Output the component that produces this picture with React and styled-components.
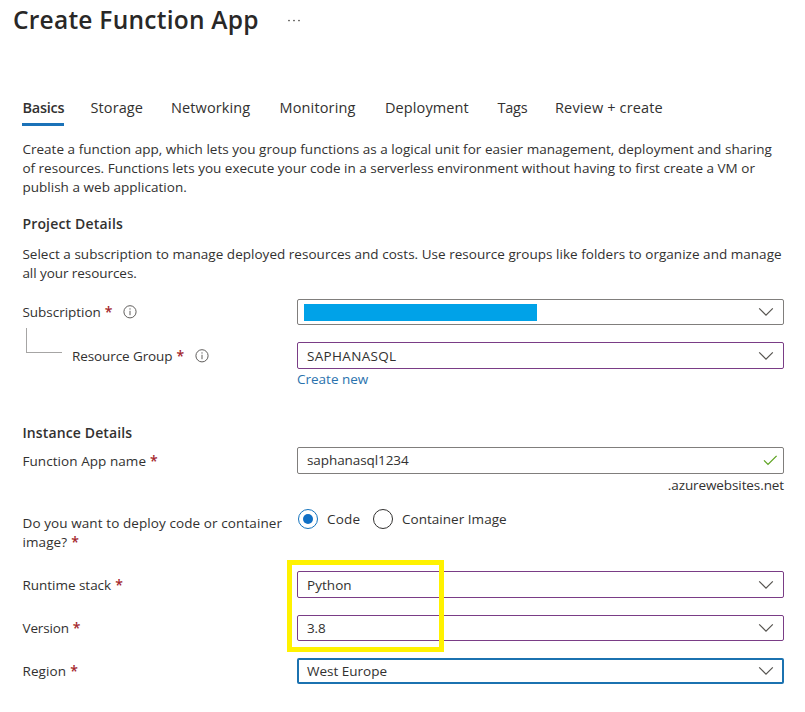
import React from "react";
import styled, { createGlobalStyle } from "styled-components";

const GlobalStyle = createGlobalStyle`
  * { box-sizing: border-box; }
  body {
    margin: 0;
    background: #fff;
    color: #323130;
    font-family: "Open Sans", "Segoe UI", sans-serif;
    font-size: 13.5px;
    line-height: 19px;
  }
  svg { display: block; flex: none; }
`;

const Page = styled.main`
  width: 805px;
  height: 712px;
  overflow: hidden;
  padding-left: 22px;
`;

const Header = styled.header`
  display: flex;
  align-items: center;
  height: 40px;
  margin-left: -9px;
`;

const Title = styled.h1`
  margin: 0;
  width: 274px;
  font-size: 24.5px;
  line-height: 40px;
  font-weight: 600;
  letter-spacing: 0.25px;
  color: #292827;
`;

const Tabs = styled.nav`
  display: flex;
  margin-top: 58px;
`;

const Tab = styled.a`
  margin-right: ${(p) => p.$gap}px;
  width: ${(p) => p.$width}px;
  padding-bottom: 5px;
  border-bottom: 3px solid ${(p) => (p.$active ? "#1b72b8" : "transparent")};
  font-size: 14.5px;
  line-height: 20px;
  font-weight: ${(p) => (p.$active ? 600 : 400)};
  letter-spacing: ${(p) => p.$track}px;
  text-indent: 0.5px;
  white-space: nowrap;
`;

const Paragraph = styled.p`
  margin: ${(p) => p.$top}px 0 0;
`;

const TextLine = styled.span`
  display: block;
  text-indent: 0.4px;
  white-space: nowrap;
  letter-spacing: ${(p) => p.$track || 0}px;
`;

const Heading = styled.h2`
  margin: ${(p) => p.$top}px 0 0;
  font-size: 14px;
  line-height: 20px;
  font-weight: 600;
  text-indent: 0.4px;
  letter-spacing: ${(p) => p.$track}px;
`;

const Row = styled.div`
  display: grid;
  grid-template-columns: 275px 487px;
  align-items: start;
  height: ${(p) => p.$height}px;
  margin-top: ${(p) => p.$top || 0}px;
`;

const LabelBox = styled.label`
  display: flex;
  align-items: flex-start;
  padding-top: ${(p) => p.$pad}px;
  padding-left: ${(p) => (p.$nested ? 0 : 0.5)}px;
  letter-spacing: ${(p) => p.$track || 0}px;
  white-space: nowrap;
`;

const Star = styled.span`
  margin-left: 4px;
  color: #a4262c;
  font-weight: 600;
  font-size: 14px;
  line-height: 18px;
  letter-spacing: 0;
`;

const InfoIcon = styled.svg`
  margin: 2px 0 0 10.5px;
`;

const Elbow = styled.span`
  width: 36px;
  height: 25px;
  margin: -19px 10px 0 4px;
  border-left: 1px solid #a6a5a4;
  border-bottom: 1px solid #a6a5a4;
`;

const borders = {
  plain: "1px solid #807e7c",
  changed: "1px solid #7a3d86",
  focused: "2px solid #1b72b0",
};

const Box = styled.div`
  display: flex;
  align-items: center;
  justify-content: space-between;
  height: ${(p) => p.$height}px;
  padding-left: ${(p) => (p.$state === "focused" ? 8 : 9)}px;
  padding-right: ${(p) => (p.$state === "focused" ? 8 : 9)}px;
  border: ${(p) => borders[p.$state]};
  border-radius: 2px;
  letter-spacing: ${(p) => p.$track || 0}px;
`;

const Value = styled.span`
  padding-top: ${(p) => p.$drop || 0}px;
`;

const NameBox = styled(Box)`
  padding-right: 5px;
  padding-bottom: 1px;
`;

const Redacted = styled.span`
  display: block;
  width: 233px;
  height: 17px;
  margin-left: -3px;
  background: #00a2e8;
`;

const Link = styled.a`
  display: block;
  margin-top: 1px;
  color: #2a72ad;
  letter-spacing: 0;
`;

const Suffix = styled.div`
  margin-top: 2px;
  text-align: right;
  letter-spacing: -0.1px;
`;

const RadioGroup = styled.div`
  display: flex;
  padding-left: 1px;
`;

const RadioOption = styled.label`
  display: flex;
  align-items: center;
  gap: 9px;
  width: ${(p) => p.$width}px;
  height: 20px;
  letter-spacing: ${(p) => p.$track}px;
  white-space: nowrap;
`;

const RadioDot = styled.span`
  display: grid;
  place-items: center;
  width: 20px;
  height: 20px;
  border: 1px solid ${(p) => (p.$on ? "#1473bd" : "#323130")};
  border-radius: 50%;
  &::after {
    content: "";
    width: 10px;
    height: 10px;
    border-radius: 50%;
    background: ${(p) => (p.$on ? "#0f6fc5" : "transparent")};
  }
`;

const Highlighted = styled.section`
  position: relative;
  margin-top: 19px;
`;

const HighlightFrame = styled.div`
  position: absolute;
  left: 265px;
  top: -11px;
  width: 157px;
  height: 92px;
  border: 5px solid #fff200;
`;

const Chevron = () => (
  <svg width="16" height="10" viewBox="0 0 16 10" fill="none">
    <path d="M1.2 1.4 L8 8.2 L14.8 1.4" stroke="#55534f" strokeWidth="1.2" />
  </svg>
);

const Info = () => (
  <InfoIcon width="14" height="14" viewBox="0 0 14 14" fill="none">
    <circle cx="7" cy="6.8" r="6.1" stroke="#605e5c" strokeWidth="1" />
    <path d="M7 5.8V10.2M7 3.3V4.6" stroke="#605e5c" strokeWidth="1" />
  </InfoIcon>
);

const Label = ({ children, pad, track, info, nested }) => (
  <LabelBox $pad={pad} $track={track} $nested={nested}>
    {nested && <Elbow />}
    {children}
    <Star>*</Star>
    {info && <Info />}
  </LabelBox>
);

const Select = ({ children, height, state, track, drop }) => (
  <Box $height={height} $state={state} $track={track}>
    <Value $drop={drop}>{children}</Value>
    <Chevron />
  </Box>
);

const tabs = [
  { label: "Basics", width: 42, gap: 26, track: -0.25, active: true },
  { label: "Storage", width: 53, gap: 27.5, track: 0.1 },
  { label: "Networking", width: 80, gap: 28.5, track: 0.12 },
  { label: "Monitoring", width: 77, gap: 28.5, track: 0.15 },
  { label: "Deployment", width: 84, gap: 28.5, track: 0.1 },
  { label: "Tags", width: 30, gap: 27.5, track: -0.25 },
  { label: "Review + create", width: 109, gap: 0, track: 0.15 },
];

export default function App() {
  return (
    <Page>
      <GlobalStyle />
      <Header>
        <Title>Create Function App</Title>
        <svg width="14" height="4" viewBox="0 0 14 4" fill="#4a4846">
          <circle cx="2" cy="2.5" r="0.85" />
          <circle cx="7" cy="2.5" r="0.85" />
          <circle cx="12" cy="2.5" r="0.85" />
        </svg>
      </Header>

      <Tabs>
        {tabs.map((t) => (
          <Tab key={t.label} $width={t.width} $gap={t.gap} $track={t.track} $active={t.active}>
            {t.label}
          </Tab>
        ))}
      </Tabs>

      <Paragraph $top={14}>
        <TextLine $track={0.03}>
          Create a function app, which lets you group functions as a logical unit for easier management, deployment and sharing
        </TextLine>
        <TextLine $track={0.01}>
          of resources. Functions lets you execute your code in a serverless environment without having to first create a VM or
        </TextLine>
        <TextLine $track={0.03}>publish a web application.</TextLine>
      </Paragraph>

      <Heading $top={17} $track={0.18}>Project Details</Heading>
      <Paragraph $top={11}>
        <TextLine $track={0.027}>
          Select a subscription to manage deployed resources and costs. Use resource groups like folders to organize and manage
        </TextLine>
        <TextLine $track={-0.06}>all your resources.</TextLine>
      </Paragraph>

      <Row $top={16} $height={43}>
        <Label pad={4} track={-0.03} info>Subscription</Label>
        <Select height={26} state="plain">
          <Redacted />
        </Select>
      </Row>
      <Row $height={46}>
        <Label pad={5} track={-0.1} info nested>Resource Group</Label>
        <div>
          <Select height={27} state="changed" track={0.33} drop={1}>SAPHANASQL</Select>
          <Link>Create new</Link>
        </div>
      </Row>

      <Heading $top={35} $track={0.13}>Instance Details</Heading>
      <Row $top={4} $height={62}>
        <Label pad={5} track={0.06}>Function App name</Label>
        <div>
          <NameBox $height={27} $state="plain" $track={-0.08}>
            saphanasql1234
            <svg width="15" height="11" viewBox="0 0 15 11" fill="none">
              <path d="M1 5.4 L5 9.4 L13.6 0.9" stroke="#5ea321" strokeWidth="1.3" />
            </svg>
          </NameBox>
          <Suffix>.azurewebsites.net</Suffix>
        </div>
      </Row>
      <Row $height={43}>
        <LabelBox $pad={5} $track={0.09}>
          <div>
            Do you want to deploy code or container
            <br />
            image?<Star>*</Star>
          </div>
        </LabelBox>
        <RadioGroup>
          <RadioOption $width={75} $track={0.2}>
            <RadioDot $on />
            Code
          </RadioOption>
          <RadioOption $width={140} $track={0.03}>
            <RadioDot />
            Container Image
          </RadioOption>
        </RadioGroup>
      </Row>

      <Highlighted>
        <Row $height={44}>
          <Label pad={5} track={-0.03}>Runtime stack</Label>
          <Select height={27} state="changed" track={0.05} drop={1}>Python</Select>
        </Row>
        <Row $height={43}>
          <Label pad={4} track={-0.15}>Version</Label>
          <Select height={26} state="changed" track={-0.1}>3.8</Select>
        </Row>
        <HighlightFrame />
      </Highlighted>
      <Row $height={26}>
        <Label pad={4} track={0.1}>Region</Label>
        <Select height={26} state="focused" track={0}>West Europe</Select>
      </Row>
    </Page>
  );
}
